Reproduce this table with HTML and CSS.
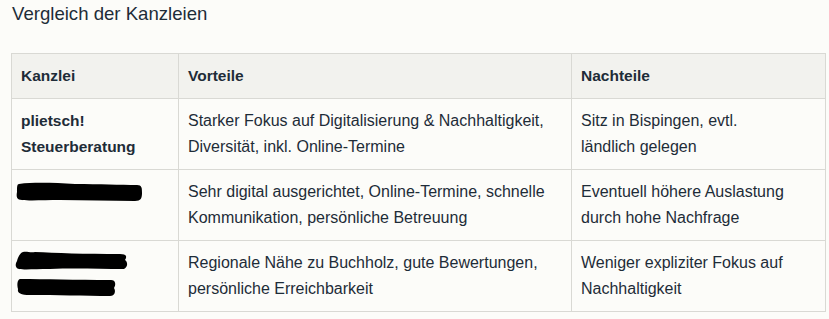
FILE: index.html
```html
<!DOCTYPE html>
<html lang="de">
<head>
<meta charset="utf-8">
<title>Vergleich der Kanzleien</title>
<link rel="stylesheet" href="styles.css">
</head>
<body>
<h3 class="title">Vergleich der Kanzleien</h3>
<table class="cmp">
  <colgroup>
    <col class="c1"><col class="c2"><col class="c3">
  </colgroup>
  <thead>
    <tr><th>Kanzlei</th><th>Vorteile</th><th>Nachteile</th></tr>
  </thead>
  <tbody>
    <tr>
      <td><strong>plietsch!<br>Steuerberatung</strong></td>
      <td>Starker Fokus auf Digitalisierung &amp; Nachhaltigkeit, Diversität, inkl. Online-Termine</td>
      <td>Sitz in Bispingen, evtl.<br>ländlich gelegen</td>
    </tr>
    <tr>
      <td>
        <svg class="redact" width="130" height="26" viewBox="0 0 130 26" aria-hidden="true">
          <path d="M4 5 C20 3 40 4 60 5 C85 5 105 6 122 6 C127 6 127 9 127 14 C127 19 126 22 120 22 C95 22 70 21 45 21 C30 21 15 22 7 21 C2 21 1 18 2 13 C2 8 2 5 4 5 Z" fill="#000"/>
        </svg>
      </td>
      <td>Sehr digital ausgerichtet, Online-Termine, schnelle Kommunikation, persönliche Betreuung</td>
      <td>Eventuell höhere Auslastung durch hohe Nachfrage</td>
    </tr>
    <tr>
      <td>
        <svg class="redact" width="130" height="52" viewBox="0 0 130 52" aria-hidden="true">
          <path d="M8 2 C12 1 15 3 20 2 C40 3 70 4 105 4 C112 4 112 7 110 10 C113 12 113 17 109 19 C85 19 60 18 35 19 C20 19 10 20 4 19 C0 18 0 14 2 11 C3 7 5 3 8 2 Z" fill="#000"/>
          <path d="M5 29 C30 29 60 30 96 30 C101 30 101 35 99 38 C101 41 100 46 95 46 C70 46 40 45 15 45 C6 45 2 43 3 39 C2 35 2 30 5 29 Z" fill="#000"/>
        </svg>
      </td>
      <td>Regionale Nähe zu Buchholz, gute Bewertungen, persönliche Erreichbarkeit</td>
      <td>Weniger expliziter Fokus auf Nachhaltigkeit</td>
    </tr>
  </tbody>
</table>
</body>
</html>
```
FILE: styles.css
```css
html, body {
  margin: 0;
  padding: 0;
  background: #fcfcf9;
}
body {
  padding: 0 4px 0 11px;
  font-family: "Liberation Sans", Arial, sans-serif;
  color: #1e2c38;
}
.title {
  margin: 0;
  padding: 2px 0 0 1px;
  font-size: 18.6px;
  font-weight: normal;
  line-height: 24px;
  color: #1e2c38;
}
.cmp {
  margin-top: 27px;
  width: 814px;
  border-collapse: collapse;
  table-layout: fixed;
  font-size: 16px;
  line-height: 26px;
}
.c1 { width: 167px; }
.c2 { width: 393px; }
.c3 { width: 254px; }
.cmp th, .cmp td {
  border: 1px solid #d9d9d4;
  padding: 9px 9px 9px 9px;
  text-align: left;
  vertical-align: top;
}
.cmp th {
  background: #f2f2ee;
  font-weight: bold;
  font-size: 15.5px;
}
.cmp td strong {
  font-weight: bold;
  font-size: 15.5px;
}
.redact {
  display: block;
  margin-left: -6px;
  overflow: visible;
}
```
